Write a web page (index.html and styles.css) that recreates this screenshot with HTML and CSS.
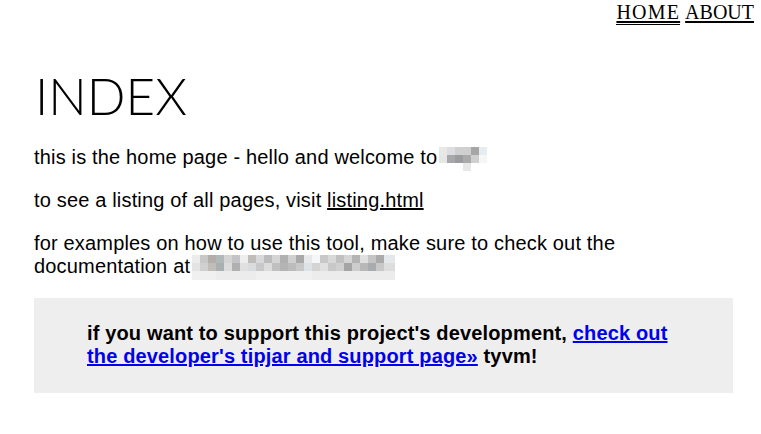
FILE: index.html
```html
<!DOCTYPE html>
<html>
<head>
<meta charset="utf-8">
<title>index</title>
<link rel="stylesheet" href="styles.css">
</head>
<body>
<nav class="nav">
  <a class="nav-link current" href="#">HOME</a>
  <a class="nav-link" href="#">ABOUT</a>
</nav>
<main class="page">
  <h1 class="title">INDEX</h1>
  <p class="text">this is the home page - hello and welcome to<span class="redact redact-a"></span></p>
  <p class="text">to see a listing of all pages, visit <a class="plain-link" href="#">listing.html</a></p>
  <p class="text">for examples on how to use this tool, make sure to check out the documentation at<span class="redact redact-b"></span></p>
  <div class="support">
    <p class="support-text">if you want to support this project's development, <a class="support-link" href="#">check out the developer's tipjar and support page»</a> tyvm!</p>
  </div>
</main>
</body>
</html>
```

FILE: styles.css
```css
html, body {
  margin: 0;
  padding: 0;
  background: #fff;
}
body {
  font-family: "Liberation Sans", Arial, sans-serif;
  color: #000;
}
.nav {
  display: flex;
  justify-content: flex-end;
  gap: 5px;
  padding: 1px 7px 0 0;
  font-family: "Liberation Serif", "Times New Roman", serif;
  font-size: 20px;
  line-height: 23px;
}
.nav-link {
  color: #000;
  text-decoration: underline;
  text-underline-offset: 2px;
}
.nav-link.current {
  letter-spacing: 1.2px;
  border-bottom: 1px solid #000;
}
.page {
  padding: 0 28px 0 34px;
}
.title {
  font-family: Lato, "Open Sans", sans-serif;
  font-weight: 300;
  font-size: 51px;
  line-height: 64px;
  margin: 39px 0 18px 1px;
  color: #000;
}
.text {
  font-size: 20px;
  letter-spacing: 0.17px;
  line-height: 23px;
  margin: 0 0 20px 0;
}
.plain-link {
  color: #000;
}
.redact {
  display: inline-block;
  vertical-align: top;
  background-repeat: no-repeat;
}
.redact-a {
  width: 48px;
  height: 24px;
  margin: 1px 0 -2px 2px;
  background-image:
    linear-gradient(90deg, #e8e8e8 0 8px, #dcdde0 8px 16px, #d0d0d0 16px 24px, #d0cfd0 24px 32px, #a8a5a5 32px 40px, #e4eef2 40px 48px),
    linear-gradient(90deg, #e6e6e4 0 8px, #a8a8aa 8px 16px, #9a9c9e 16px 24px, #aaaaaa 24px 32px, #cfcfcf 32px 40px, #f4f6f8 40px 48px),
    linear-gradient(90deg, transparent 0 24px, #e8e8e8 24px 32px, transparent 32px);
  background-size: 100% 8px, 100% 8px, 100% 8px;
  background-position: 0 0, 0 8px, 0 16px;
}
.redact-b {
  width: 203px;
  height: 25px;
  margin: 0 0 -2px 2px;
  background-image:
    linear-gradient(90deg, #ececec 0 8px, #c8c8c8 8px 16px, #b4aeaa 16px 24px, #b0b8ba 24px 32px, #d4d4d4 32px 40px, #c4c4c8 40px 48px, #eeeeee 48px 56px, #c0bcba 56px 64px, #d8d8dc 64px 72px, #bcbcbc 72px 80px, #d4d4d4 80px 88px, #b0b0b0 88px 96px, #d0d0d0 96px 104px, #a8a8a8 104px 112px, #e8e8e8 112px 120px, #f4f6f8 120px 128px, #c8c8c8 128px 136px, #d8d8d8 136px 144px, #c0c0c0 144px 152px, #d4d4d4 152px 160px, #b4b4b4 160px 168px, #e0e0e0 168px 176px, #c4c4c4 176px 184px, #aaaaaa 184px 192px, #e4e8ec 192px 203px),
    linear-gradient(90deg, #e4e4e4 0 8px, #d0d0d0 8px 16px, #c0bcb8 16px 24px, #a8b0b2 24px 32px, #dcdcdc 32px 40px, #b0b0b0 40px 48px, #e0e0e0 48px 56px, #d8dcdc 56px 64px, #c8c8c8 64px 72px, #dcdcdc 72px 80px, #c0c0c0 80px 88px, #b4b4b4 88px 96px, #bcbcbc 96px 104px, #c8c8c8 104px 112px, #dde2e6 112px 120px, #d4d4d4 120px 128px, #e0e0e0 128px 136px, #c8c8c8 136px 144px, #d0d0d0 144px 152px, #a4a4a4 152px 160px, #cccccc 160px 168px, #b8b8b8 168px 176px, #a8acae 176px 184px, #c8c8c8 184px 192px, #dddddd 192px 203px),
    linear-gradient(90deg, #f0f0f0 0 24px, #ececec 24px 64px, #f0f0f0 64px 120px, #ececec 120px 203px);
  background-size: 100% 8px, 100% 8px, 100% 9px;
  background-position: 0 0, 0 8px, 0 16px;
}
.support {
  background: #eeeeee;
  margin-top: 19px;
  padding: 24px 53px 25px 53px;
}
.support-text {
  margin: 0;
  font-weight: bold;
  font-size: 20px;
  letter-spacing: 0.15px;
  line-height: 23px;
  color: #000;
}
.support-link {
  color: #0000ee;
}
```
